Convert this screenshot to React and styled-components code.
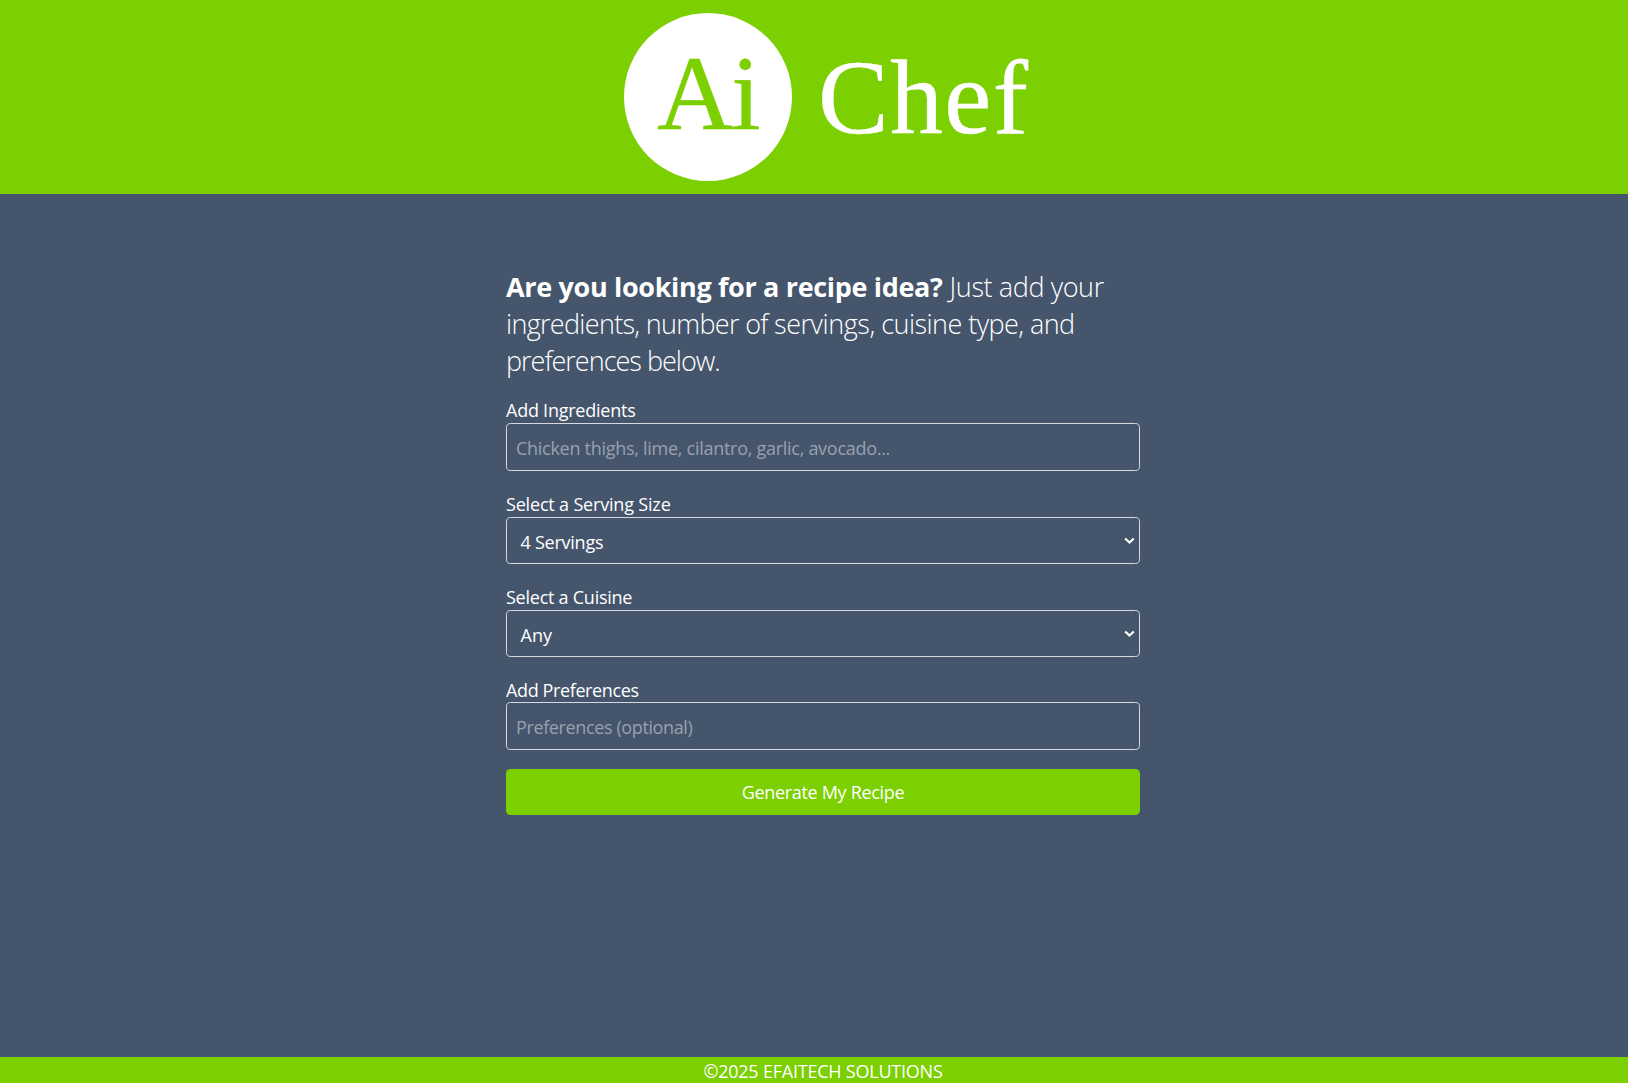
import React from "react";
import styled, { createGlobalStyle } from "styled-components";

const lime = "#7ccf00";
const slate = "#45556c";

const GlobalStyle = createGlobalStyle`
  *, *::before, *::after { box-sizing: border-box; }
  body {
    margin: 0;
    background: ${slate};
    color: #fff;
    font-family: "Open Sans", "Noto Sans", sans-serif;
    font-size: 18px;
    line-height: 27.5px;
  }
`;

const Page = styled.div`
  display: flex;
  flex-direction: column;
  height: 1083px;
  overflow: hidden;
`;

const Header = styled.header`
  display: flex;
  flex: none;
  height: 193.5px;
  padding: 13px 0 0 624px;
  background: ${lime};
`;

const Logo = styled.div`
  display: flex;
  align-items: flex-start;
  gap: 26px;
  font-family: "Liberation Serif", "Times New Roman", serif;
  font-size: 106px;
  line-height: 120px;
  white-space: nowrap;
  -webkit-text-stroke: 0.4px currentColor;
`;

const Badge = styled.span`
  width: 168px;
  height: 168px;
  padding: 20.5px 0 0 33px;
  border-radius: 50%;
  background: #fff;
  color: ${lime};
  letter-spacing: -2.2px;
`;

const Wordmark = styled.span`
  padding-top: 25px;
  letter-spacing: 1.3px;
`;

const Main = styled.main`
  flex: 1;
  padding: 74.4px 0 0 506px;
`;

const Form = styled.form`
  display: flex;
  flex-direction: column;
  width: 634px;
`;

const Intro = styled.p`
  margin: 0 0 16.4px;
  font-size: 27px;
  font-weight: 300;
  line-height: 37px;
  white-space: nowrap;
`;

const Spaced = styled.span`
  font-weight: ${(p) => p.$weight || "inherit"};
  letter-spacing: ${(p) => p.$track || 0}px;
`;

const Field = styled.div`
  display: flex;
  flex-direction: column;
  height: ${(p) => p.$height}px;
`;

const Label = styled.label`
  flex: none;
  height: 27.5px;
  line-height: 31px;
  letter-spacing: ${(p) => p.$track || 0}px;
`;

const Input = styled.input`
  height: 48px;
  padding: 2px 9px 0;
  border: 1px solid #d5dae1;
  border-radius: 4.6px;
  background: transparent;
  color: #fff;
  font: inherit;
  letter-spacing: ${(p) => p.$track || 0}px;
  &::placeholder { color: #98a1af; opacity: 1; }
`;

const SelectBox = styled.button`
  display: flex;
  align-items: center;
  justify-content: space-between;
  height: 47px;
  padding: 4px 4px 0 13.5px;
  border: 1px solid #d5dae1;
  border-radius: 4.6px;
  background: transparent;
  color: #fff;
  font: inherit;
  letter-spacing: ${(p) => p.$track || 0}px;
`;

const Submit = styled.button`
  height: 46px;
  padding: 2px 0 0;
  border: 0;
  border-radius: 4.6px;
  background: ${lime};
  color: #fff;
  font: inherit;
  letter-spacing: ${(p) => p.$track || 0}px;
`;

const Footer = styled.footer`
  flex: none;
  height: 26.5px;
  background: ${lime};
  text-align: center;
  line-height: 28px;
  padding-left: 18px;
`;

const Arrow = styled.svg`
  margin-bottom: 2px;
`;

const Chevron = () => (
  <Arrow width="11" height="8" viewBox="0 0 11 8" fill="none">
    <path d="M1.2 1.5 5.5 5.6 9.8 1.5" stroke="#fff" strokeWidth="2.2" />
  </Arrow>
);

export default function App() {
  return (
    <Page>
      <GlobalStyle />
      <Header>
        <Logo>
          <Badge>Ai</Badge>
          <Wordmark>Chef</Wordmark>
        </Logo>
      </Header>
      <Main>
        <Form onSubmit={(e) => e.preventDefault()}>
          <Intro>
            <Spaced as="strong" $weight={700} $track={-0.335}>Are you looking for a recipe idea?</Spaced>{" "}
            <Spaced $track={-0.4}>Just add your</Spaced>
            <br />
            <Spaced $track={-0.69}>ingredients, number of </Spaced>
            <Spaced $track={-0.45}>servings, </Spaced>
            <Spaced $track={-0.56}>cuisine type, and</Spaced>
            <br />
            <Spaced $track={-1}>preferences below.</Spaced>
          </Intro>
          <Field $height={94}>
            <Label htmlFor="ingredients" $track={-0.24}>Add Ingredients</Label>
            <Input id="ingredients" $track={-0.28} placeholder="Chicken thighs, lime, cilantro, garlic, avocado..." />
          </Field>
          <Field $height={93}>
            <Label $track={-0.18}>Select a Serving Size</Label>
            <SelectBox type="button" $track={-0.25}>4 Servings<Chevron /></SelectBox>
          </Field>
          <Field $height={92.5}>
            <Label $track={-0.25}>Select a Cuisine</Label>
            <SelectBox type="button">Any<Chevron /></SelectBox>
          </Field>
          <Field $height={94}>
            <Label htmlFor="preferences" $track={-0.38}>Add Preferences</Label>
            <Input id="preferences" $track={-0.38} placeholder="Preferences (optional)" />
          </Field>
          <Submit $track={-0.32}>Generate My Recipe</Submit>
        </Form>
      </Main>
      <Footer><Spaced $track={-0.22}>©2025 EFAITECH SOLUTIONS</Spaced></Footer>
    </Page>
  );
}
